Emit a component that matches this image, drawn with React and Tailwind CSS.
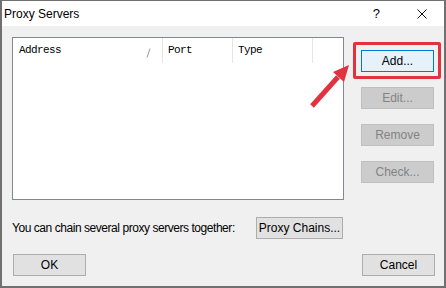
import React from 'react';

const ui = { fontFamily: '"Liberation Sans", Arial, sans-serif' };
const listFont = { fontFamily: '"Liberation Mono", "Courier New", monospace' };

function Btn({ children, disabled, primary, className = '' }) {
  let tone = 'bg-[#e1e1e1] border-[#adadad] text-black';
  if (disabled) tone = 'bg-[#cccccc] border-[#bfbfbf] text-[#838383]';
  if (primary) tone = 'bg-[#e5f1fb] border-[#0078d7] text-black';
  return (
    <div
      className={`w-[73px] h-[22px] border flex items-center justify-center text-[12px] leading-none ${tone} ${className}`}
    >
      {children}
    </div>
  );
}

export default function App() {
  return (
    <div className="relative w-[446px] h-[288px] bg-[#f0f0f0] border-x-2 border-b-2 border-t border-[#707070] flex flex-col" style={ui}>
      {/* Title bar */}
      <div className="h-[25px] bg-white flex items-center pl-[2px] pr-[17px] shrink-0">
        <span className="text-[12px] text-black flex-1">Proxy Servers</span>
        <span className="text-[13px] text-black mr-[37px]">?</span>
        <svg width="10" height="10" viewBox="0 0 10 10">
          <path d="M0.5 0.5 L9.5 9.5 M9.5 0.5 L0.5 9.5" stroke="#111" strokeWidth="1" />
        </svg>
      </div>

      {/* Body */}
      <div className="flex-1 pl-[10px] pr-[9px] pt-[11px] flex flex-col">
        <div className="flex">
          {/* List view */}
          <div className="w-[332px] h-[163px] bg-white border border-[#828790] flex flex-col">
            <div className="h-[25px] flex text-[11px] tracking-[-0.6px] text-black" style={listFont}>
              <div className="relative w-[150px] flex items-center pl-[6px] border-r border-[#e5e5e5]">
                Address
                <svg className="absolute left-[133px] top-[10px]" width="5" height="10" viewBox="0 0 5 10">
                  <path d="M4 0.5 L1 9.5" stroke="#9a9a9a" strokeWidth="1" />
                </svg>
              </div>
              <div className="w-[70px] flex items-center pl-[5px] border-r border-[#e5e5e5]">Port</div>
              <div className="w-[80px] flex items-center pl-[5px] border-r border-[#e5e5e5]">Type</div>
            </div>
          </div>

          {/* Side buttons */}
          <div className="ml-[17px] pt-[13px] flex flex-col gap-[15px]">
            <div className="relative">
              <Btn primary>Add...</Btn>
              <div className="absolute left-[-8px] top-[-8px] right-[-7px] bottom-[-7px] border-[3px] border-[#e1323f] rounded-[2px]" />
            </div>
            <Btn disabled>Edit...</Btn>
            <Btn disabled>Remove</Btn>
            <Btn disabled>Check...</Btn>
          </div>
        </div>

        <div className="mt-[17px] flex items-center">
          <span className="w-[244px] text-[12px] tracking-[-0.45px] text-black">You can chain several proxy servers together:</span>
          <Btn className="w-[87px]">Proxy Chains...</Btn>
        </div>

        <div className="mt-[15px] flex justify-between pl-[1px]">
          <Btn>OK</Btn>
          <Btn>Cancel</Btn>
        </div>
      </div>

      {/* Arrow */}
      <svg className="absolute left-0 top-0 pointer-events-none" width="446" height="288" viewBox="0 0 446 288">
        <path d="M310 105 L336 76" stroke="#e1323f" strokeWidth="5" />
        <polygon points="347,64 342,81 331,71" fill="#e1323f" />
      </svg>
    </div>
  );
}
